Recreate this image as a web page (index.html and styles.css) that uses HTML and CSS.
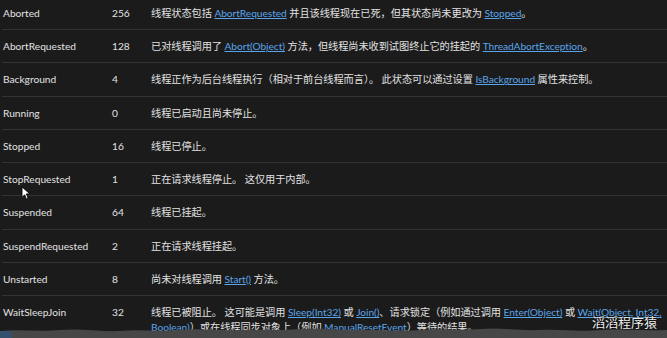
FILE: index.html
```html
<!DOCTYPE html>
<html lang="zh-CN">
<head>
<meta charset="utf-8">
<link rel="stylesheet" href="styles.css">
</head>
<body>
<div class="page">
  <table class="enum">
    <tbody>
      <tr><td class="name">Aborted</td><td class="val">256</td><td class="desc">线程状态包括 <a href="#">AbortRequested</a> 并且该线程现在已死，但其状态尚未更改为 <a href="#">Stopped</a>。</td></tr>
      <tr><td class="name">AbortRequested</td><td class="val">128</td><td class="desc">已对线程调用了 <a href="#">Abort(Object)</a> 方法，但线程尚未收到试图终止它的挂起的 <a href="#">ThreadAbortException</a>。</td></tr>
      <tr><td class="name">Background</td><td class="val">4</td><td class="desc">线程正作为后台线程执行（相对于前台线程而言）。 此状态可以通过设置 <a href="#">IsBackground</a> 属性来控制。</td></tr>
      <tr><td class="name">Running</td><td class="val">0</td><td class="desc">线程已启动且尚未停止。</td></tr>
      <tr><td class="name">Stopped</td><td class="val">16</td><td class="desc">线程已停止。</td></tr>
      <tr><td class="name">StopRequested</td><td class="val">1</td><td class="desc">正在请求线程停止。 这仅用于内部。</td></tr>
      <tr><td class="name">Suspended</td><td class="val">64</td><td class="desc">线程已挂起。</td></tr>
      <tr><td class="name">SuspendRequested</td><td class="val">2</td><td class="desc">正在请求线程挂起。</td></tr>
      <tr><td class="name">Unstarted</td><td class="val">8</td><td class="desc">尚未对线程调用 <a href="#">Start()</a> 方法。</td></tr>
      <tr><td class="name">WaitSleepJoin</td><td class="val">32</td><td class="desc">线程已被阻止。 这可能是调用 <a href="#">Sleep(Int32)</a> 或 <a href="#">Join()</a>、请求锁定（例如通过调用 <a href="#">Enter(Object)</a> 或 <a href="#">Wait(Object, Int32, Boolean)</a>）或在线程同步对象上（例如 <a href="#">ManualResetEvent</a>）等待的结果。</td></tr>
    </tbody>
  </table>
</div>
<svg class="cursor" width="9" height="14" viewBox="0 0 10 16"><path d="M1 1 L1 13 L4 10 L6 15 L8 14 L6 9 L10 9 Z" fill="#fff" stroke="#000" stroke-width="1"/></svg>
<svg class="scrub" width="667" height="12" viewBox="0 0 667 12" preserveAspectRatio="none"><path d="M0 5 C20 3 40 6 60 4 C80 2 100 6 120 5 C140 3 160 6 180 4 C200 2 220 5 240 4 C260 3 280 5 300 3 C320 1 340 5 360 4 C380 3 400 6 420 4 C440 2 460 5 480 3 C500 1 520 5 540 4 C560 3 580 6 600 4 C620 2 640 5 667 4 L667 12 L0 12 Z" fill="#474747"/><rect x="0" y="5" width="12" height="7" fill="#34506a"/></svg>
<div class="wm">滔滔程序猿</div>
</body>
</html>
```
FILE: styles.css
```css
html, body {
  margin: 0;
  padding: 0;
  background: #1b1b1b;
  overflow: hidden;
}
body {
  width: 667px;
  height: 338px;
  position: relative;
  font-family: "Lato", "Noto Sans CJK SC", sans-serif;
  font-size: 10.2px;
  color: #e2e2e2;
}
.page {
  margin-top: -3.25px;
  padding-left: 2px;
}
.enum {
  border-collapse: collapse;
  width: 665px;
  table-layout: fixed;
}
.enum td {
  vertical-align: top;
  padding: 9px 0 8.25px 0;
  line-height: 15px;
  border-bottom: 1px solid #333333;
}
.enum tr:last-child td {
  border-bottom: none;
}
.enum .name {
  width: 109px;
  padding-left: 1px;
}
.enum .val {
  width: 39px;
}
.enum .desc {
  padding-right: 0;
  letter-spacing: -0.05px;
}
.enum a {
  color: #5aa5ea;
  text-decoration: underline;
}
.cursor {
  position: absolute;
  left: 21px;
  top: 186px;
}
.scrub {
  position: absolute;
  left: 0;
  bottom: 0;
}
.wm {
  position: absolute;
  right: 10px;
  bottom: 7px;
  font-family: "Noto Sans CJK SC", sans-serif;
  font-size: 13px;
  color: #ececec;
  text-shadow: 0 0 2px #000;
}
```
